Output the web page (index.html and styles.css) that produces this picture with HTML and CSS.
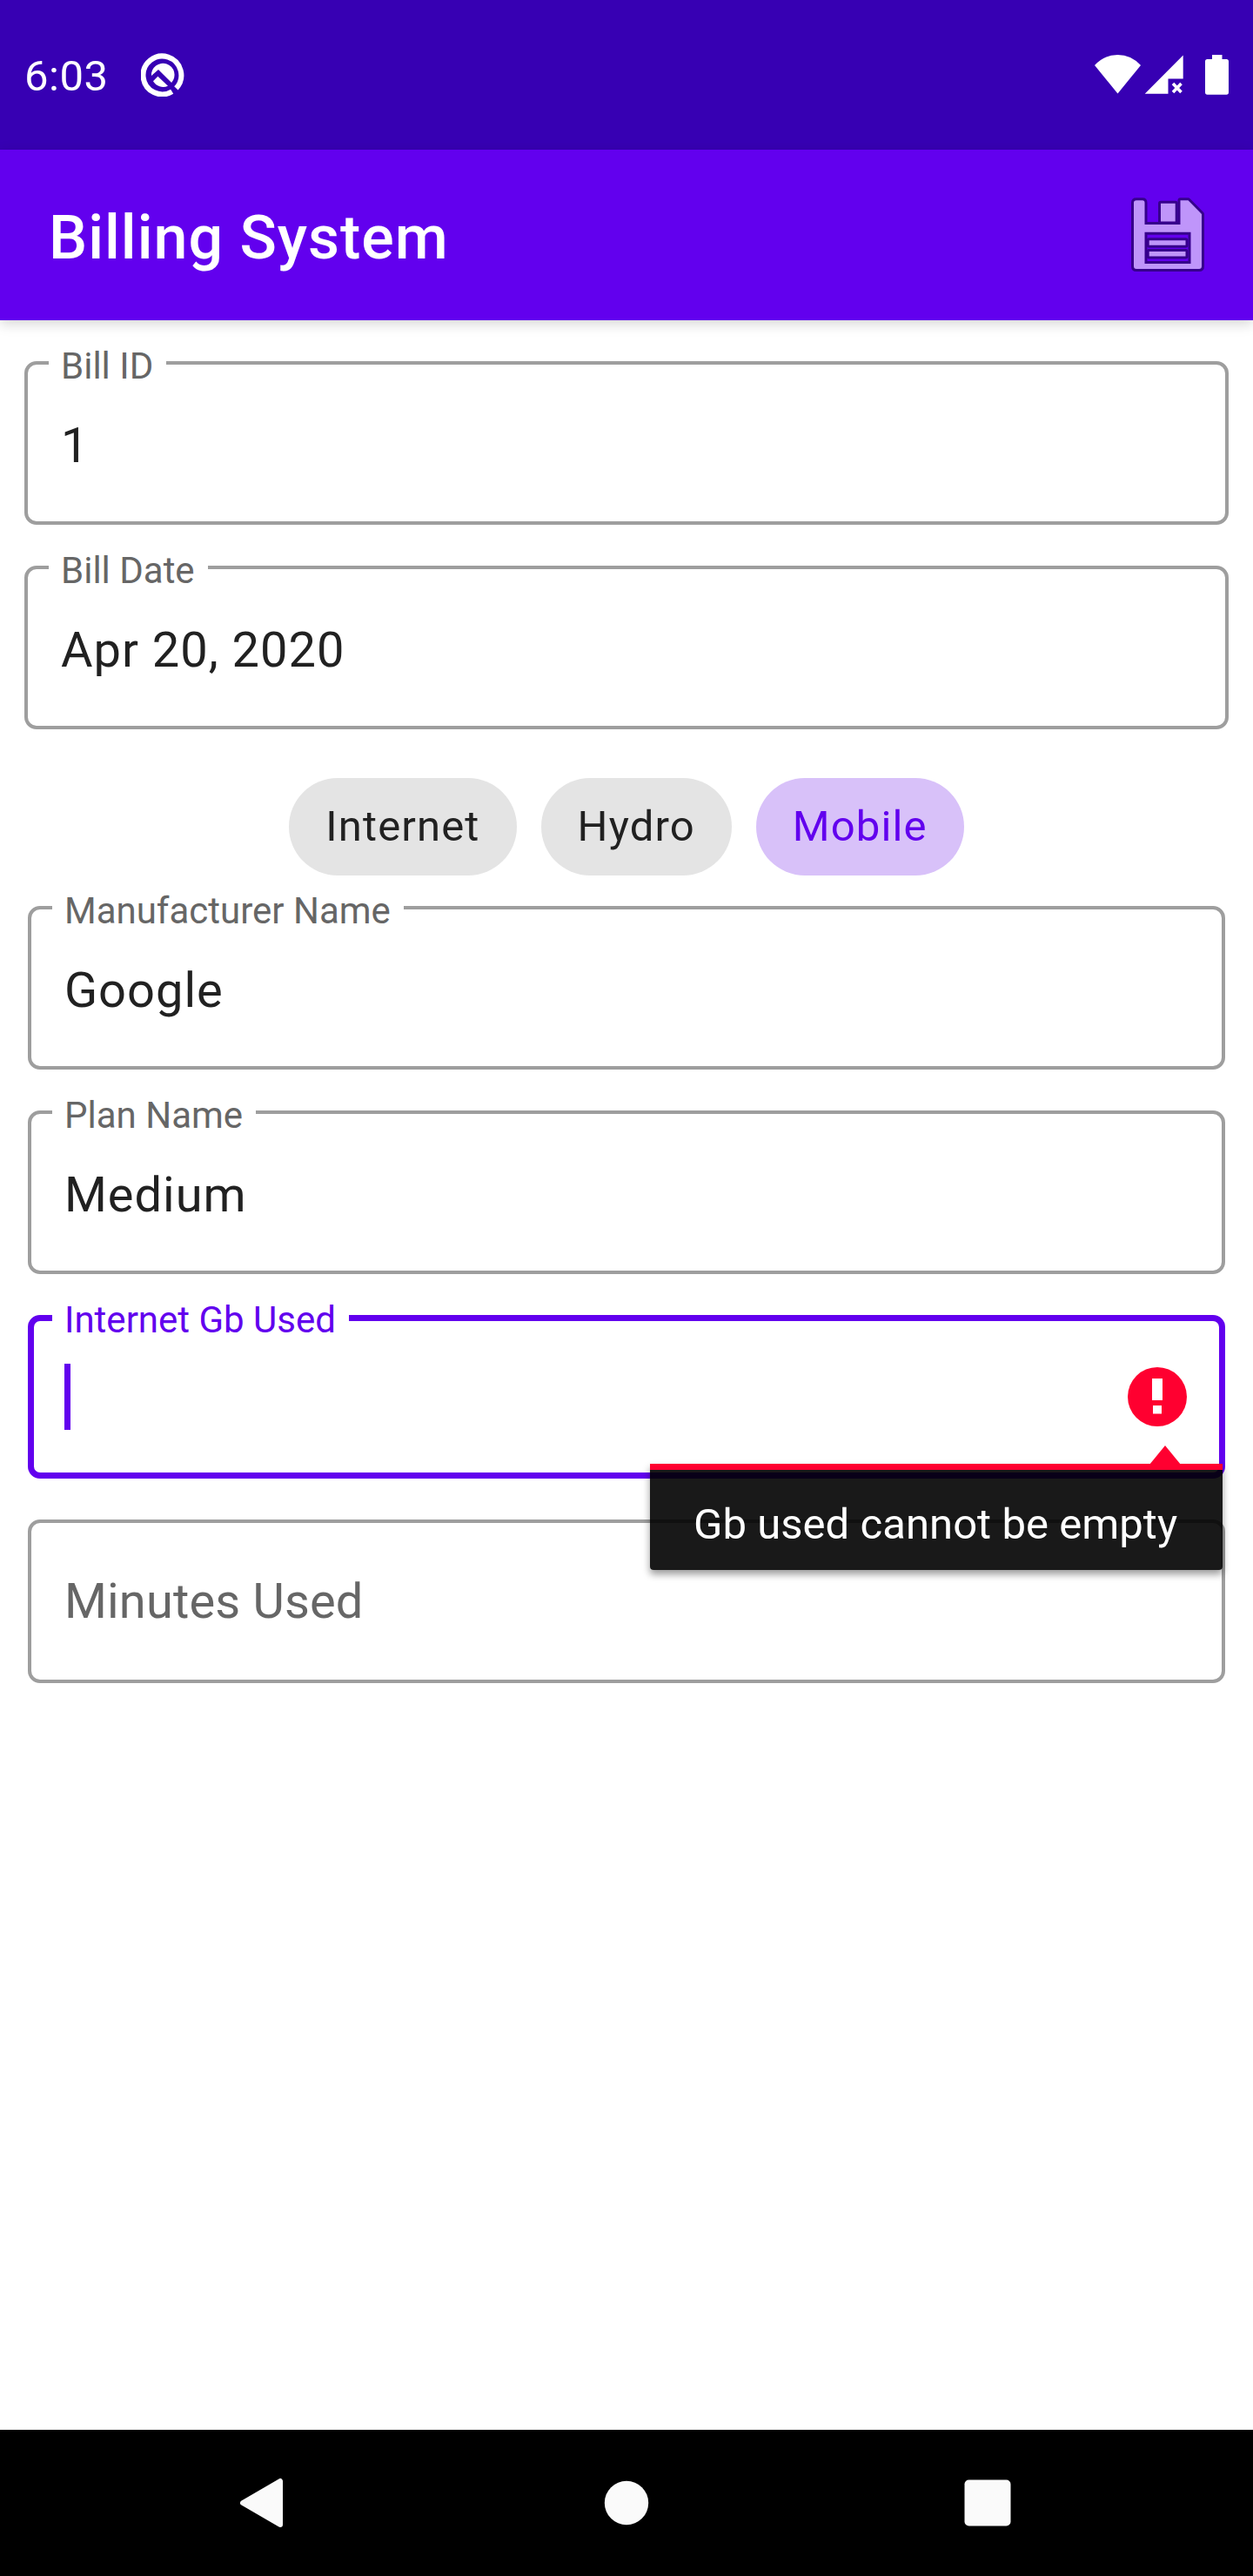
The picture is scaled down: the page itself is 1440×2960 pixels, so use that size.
FILE: index.html
```
<!DOCTYPE html>
<html lang="en">
<head>
<meta charset="utf-8">
<title>Billing System</title>
<link rel="stylesheet" href="styles.css">
</head>
<body>
<div class="screen">
  <div class="status-bar">
    <span class="clock">6:03</span>
    <svg class="status-q" width="50" height="50" viewBox="0 0 50 50">
      <path d="M35.700 44.200A21.900 21.900 0 1 1 40.400 40.400" fill="none" stroke="#fff" stroke-width="6"/>
      <path d="M12 26A13.300 13.300 0 1 1 35.100 34L20 19Z" fill="#fff"/>
      <path d="M14 32.300L19.400 26.700L31 37.700A13.300 13.300 0 0 1 14 32.300Z" fill="#fff"/>
    </svg>
    <svg class="status-icons" width="154" height="46" viewBox="1258 63 154 46" fill="#fff">
      <path d="M1284.500 107.500L1258 75Q1269 63 1284.500 63T1311 75Z"/>
      <path d="M1359.700 63.500V90.500H1342.500V107.700H1315.700Z"/>
      <path d="M1348 96L1357.500 106M1357.500 96L1348 106" stroke="#fff" stroke-width="3.600"/>
      <path d="M1393 63h11.500v5H1409.500q2.500 0 2.500 2.500V106q0 2.700-2.500 2.700H1387.500q-2.500 0-2.500-2.700V70.500q0-2.500 2.500-2.500H1393Z"/>
    </svg>
  </div>
  <header class="app-bar">
    <h1 class="title">Billing System</h1>
    <svg class="save" width="84" height="88" viewBox="1300 227 84 88">
      <path d="M1306 231.300H1313Q1315.500 231.300 1315.500 234V259H1356.500V231.300H1365.500L1381 247V307Q1381 310 1378 310H1306Q1303 310 1303 307V234Q1303 231.300 1306 231.300ZM1315.500 267.700V304H1368.500V267.700Z" fill-rule="evenodd"/>
      <path d="M1334 234.700H1350.700V255.500H1334ZM1320.700 277.300H1362.500V282.700H1320.700ZM1320.700 290H1362.500V295.500H1320.700Z"/>
    </svg>
  </header>
  <main class="form">
    <div class="group">
      <div class="field"><span class="label">Bill ID</span><span class="value">1</span></div>
      <div class="field"><span class="label">Bill Date</span><span class="value">Apr 20, 2020</span></div>
    </div>
    <div class="chips">
      <span class="chip">Internet</span>
      <span class="chip">Hydro</span>
      <span class="chip chip-selected">Mobile</span>
    </div>
    <div class="group group-inset">
      <div class="field"><span class="label">Manufacturer Name</span><span class="value">Google</span></div>
      <div class="field"><span class="label">Plan Name</span><span class="value">Medium</span></div>
      <div class="field field-focused">
        <span class="label">Internet Gb Used</span>
        <span class="cursor"></span>
        <svg class="error-icon" width="70" height="70" viewBox="0 0 70 70">
          <circle cx="35" cy="35" r="34" fill="#ff0030"/>
          <path d="M29 14H41V39H29ZM30 45H40V54.500H30Z" fill="#fff"/>
        </svg>
        <div class="tooltip">
          <svg class="tooltip-arrow" width="36" height="22" viewBox="0 0 36 22"><path d="M18 0L36 22H0Z" fill="#ff0030"/></svg>
          <span class="tooltip-text">Gb used cannot be empty</span>
        </div>
      </div>
      <div class="field"><span class="value hint">Minutes Used</span></div>
    </div>
  </main>
  <nav class="nav-bar">
    <svg width="58" height="60" viewBox="0 0 58 60"><path d="M5 30L48 5V55Z" fill="#fafafa" stroke="#fafafa" stroke-width="6" stroke-linejoin="round"/></svg>
    <svg width="54" height="54" viewBox="0 0 54 54"><circle cx="27" cy="27" r="25.200" fill="#fafafa"/></svg>
    <svg width="54" height="54" viewBox="0 0 54 54"><rect x="0.500" y="0.500" width="53" height="53" rx="5" fill="#fafafa"/></svg>
  </nav>
</div>
</body>
</html>
```
FILE: styles.css
```
* { box-sizing: border-box; }
body { margin: 0; font-family: Roboto, sans-serif; background: #fff; }
svg { display: block; flex: none; }
.screen { width: 1440px; height: 2960px; display: flex; flex-direction: column; overflow: hidden; }

.status-bar { height: 172px; flex: none; background: #3700b3; color: #fff; display: flex; align-items: flex-start; padding: 0 28px; }
.clock { font-size: 49px; line-height: 50px; padding-top: 63px; width: 134px; letter-spacing: .01em; }
.status-q { margin-top: 61px; }
.status-icons { margin: 63px 0 0 auto; }

.app-bar { height: 196px; flex: none; background: #6200ee; color: #fff; display: flex; align-items: center; justify-content: space-between; padding: 0 56px; box-shadow: 0 4px 14px rgba(0, 0, 0, .17); }
.title { margin: 0; padding-top: 5px; font-size: 70px; line-height: 82px; font-weight: 500; letter-spacing: .014em; }
.save { fill: #bf95fa; stroke: #36008c; stroke-width: 6px; stroke-linejoin: round; paint-order: stroke; }

.form { flex: 1; padding-top: 47px; }
.group { display: flex; flex-direction: column; gap: 47px; padding: 0 28px; }
.group-inset { padding: 0 32px; }
.field { position: relative; height: 188px; border: 4px solid #9e9e9e; border-radius: 14px; padding: 55px 38px 0; }
.label { position: absolute; left: 24px; top: -19px; padding: 0 15px 0 14px; background: #fff; color: #666; font-size: 42px; line-height: 42px; white-space: nowrap; }
.value { display: block; font-size: 56px; line-height: 76px; letter-spacing: .0175em; color: #212121; }
.hint { margin-top: -3px; color: #666; letter-spacing: .003em; }
.field-focused { border: 7px solid #6200ee; padding: 49px 35px 0; z-index: 1; }
.field-focused .label { left: 21px; top: -22px; color: #6200ee; }
.cursor { display: block; width: 7px; height: 76px; background: #6200ee; }
.error-icon { position: absolute; left: 1256px; top: 52px; }

.tooltip { position: absolute; left: 708px; top: 164px; width: 658px; height: 122px; border-top: 7px solid #ff0030; border-radius: 0 0 4px 4px; background: rgba(0, 0, 0, .9); color: #fff; padding: 32px 50px 0; box-shadow: 0 5px 9px rgba(0, 0, 0, .4); }
.tooltip-arrow { position: absolute; left: 574px; top: -28px; }
.tooltip-text { display: block; font-size: 49px; line-height: 62px; letter-spacing: .001em; white-space: nowrap; }

.chips { display: flex; justify-content: center; gap: 28px; margin: 56px 0 35px; }
.chip { height: 112px; border-radius: 56px; padding: 0 42px; background: #e4e4e4; color: #212121; font-size: 49px; line-height: 111px; letter-spacing: .0232em; }
.chip-selected { background: #d8c1f9; color: #6200ee; }

.nav-bar { height: 168px; flex: none; background: #000; display: flex; align-items: center; justify-content: space-between; padding: 0 278px 0 274px; }
```
